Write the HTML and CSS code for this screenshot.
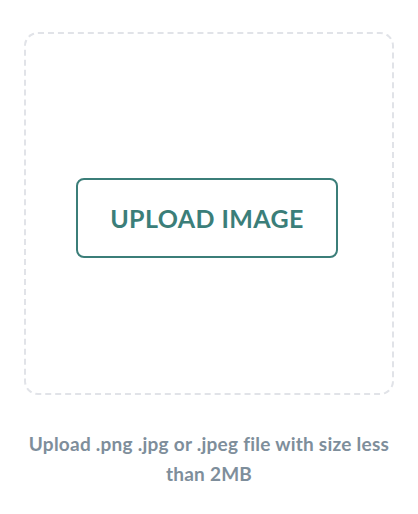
FILE: index.html
```html
<!DOCTYPE html>
<html>
<head>
<meta charset="utf-8">
<link rel="stylesheet" href="styles.css">
</head>
<body>
<div class="uploader">
  <div class="dropzone">
    <button class="upload-btn" type="button">UPLOAD IMAGE</button>
  </div>
  <p class="hint">Upload .png .jpg or .jpeg file with size less than 2MB</p>
</div>
</body>
</html>
```
FILE: styles.css
```css
html, body {
  margin: 0;
  padding: 0;
  background: #ffffff;
}
body {
  font-family: Lato, "Open Sans", sans-serif;
}
.uploader {
  padding: 32px 24px 0 24px;
  display: flex;
  flex-direction: column;
  align-items: center;
}
.dropzone {
  box-sizing: border-box;
  width: 370px;
  height: 363px;
  border: 2px dashed #e1e3e8;
  border-radius: 14px;
  display: flex;
  align-items: center;
  justify-content: center;
}
.upload-btn {
  box-sizing: border-box;
  width: 262px;
  height: 80px;
  margin: 9px 4px 0 0;
  background: #ffffff;
  border: 2px solid #3b7e79;
  border-radius: 8px;
  color: #3b7e79;
  font-family: Lato, sans-serif;
  font-weight: 700;
  font-size: 25px;
  letter-spacing: 0.4px;
  padding: 0;
}
.hint {
  margin: 34px 0 0 0;
  width: 370px;
  text-align: center;
  color: #7e8e9b;
  font-weight: 700;
  font-size: 19px;
  letter-spacing: 0.25px;
  line-height: 30px;
}
```
